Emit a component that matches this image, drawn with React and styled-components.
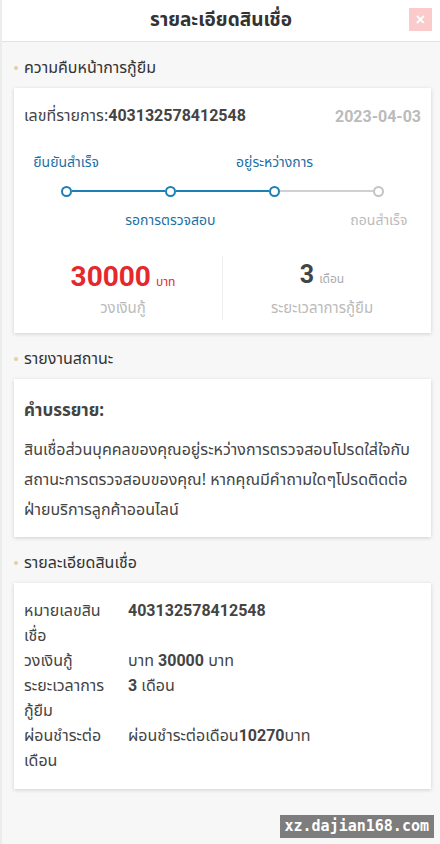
import React from 'react';
import styled, { createGlobalStyle } from 'styled-components';

const GlobalStyle = createGlobalStyle`
  html, body {
    margin: 0;
    padding: 0;
    background: #f7f7f7;
  }
  body {
    font-family: "Noto Sans", "Noto Sans Thai", "DejaVu Sans", sans-serif;
    color: #444;
  }
`;

const Page = styled.div`
  position: relative;
  min-height: 844px;
  background: #f7f7f7;
  border-left: 2px solid #ececec;
  box-sizing: border-box;
`;

/** Header rendering the top bar */
const Header = styled.header`
  position: relative;
  height: 41px;
  background: #fff;
  border-bottom: 1px solid #e2e2e2;
  display: flex;
  align-items: center;
  justify-content: center;
`;

const HeaderTitle = styled.h1`
  margin: 0;
  font-size: 19px;
  font-weight: 700;
  color: #333;
`;

const CloseBtn = styled.button`
  position: absolute;
  right: 8px;
  top: 8px;
  width: 23px;
  height: 23px;
  border: none;
  padding: 0;
  background: #fbcaca;
  color: #fff;
  font-size: 16px;
  font-weight: 700;
  line-height: 23px;
  cursor: pointer;
`;

const Content = styled.main`
  padding: 0 9px 40px 12px;
`;

const SectionTitle = styled.div`
  display: flex;
  align-items: center;
  gap: 6px;
  height: 22px;
  padding: 15px 0 9px;
  font-size: 16px;
  color: #333;

  &::before {
    content: '';
    width: 4px;
    height: 4px;
    border-radius: 50%;
    background: #e8cda8;
  }
`;

const Card = styled.section`
  background: #fff;
  box-shadow: 0 1px 4px rgba(0, 0, 0, 0.16);
  padding: ${({ $pad }) => $pad || '10px'};
`;

const OrderRow = styled.div`
  display: flex;
  justify-content: space-between;
  align-items: center;
  padding: 6px 0 0;
  font-size: 16px;
  color: #444;
`;

const Num = styled.span`
  font-family: Roboto, "Liberation Sans", sans-serif;
  font-weight: 700;
  font-size: ${({ $size }) => $size || '16px'};
  color: ${({ $color }) => $color || '#444'};
`;

const Steps = styled.div`
  display: grid;
  grid-template-columns: repeat(4, 1fr);
  margin: 19px -10px 0;
`;

const Step = styled.div`
  display: grid;
  grid-template-rows: 30px 28px 30px;
  justify-items: center;
  align-items: center;
`;

const StepLabel = styled.div`
  font-size: 14px;
  color: ${({ $done }) => ($done ? '#1d6fa3' : '#bbb')};
  grid-row: ${({ $below }) => ($below ? 3 : 1)};
  white-space: nowrap;
`;

const Track = styled.div`
  grid-row: 2;
  width: 100%;
  display: flex;
  align-items: center;
`;

const Half = styled.div`
  flex: 1;
  height: 2px;
  background: ${({ $state }) =>
    $state === 'none' ? 'transparent' : $state === 'done' ? '#1d7fb3' : '#d0d0d0'};
`;

const Dot = styled.div`
  width: 7px;
  height: 7px;
  border-radius: 50%;
  border: 2px solid ${({ $done }) => ($done ? '#1d7fb3' : '#c4c4c4')};
  background: #fff;
  flex: none;
`;

const Stats = styled.div`
  display: grid;
  grid-template-columns: 1fr 1px 1fr;
  margin-top: 21px;
  padding-bottom: 3px;
`;

const Stat = styled.div`
  display: flex;
  flex-direction: column;
  align-items: center;
  gap: 5px;
  padding-top: 4px;
`;

const Divider = styled.div`
  background: #eee;
`;

const StatValue = styled.div`
  display: flex;
  align-items: baseline;
  gap: 5px;
  height: 32px;
`;

const Unit = styled.span`
  font-size: 12px;
  color: ${({ $color }) => $color || '#aaa'};
`;

const StatLabel = styled.div`
  font-size: 15px;
  color: #bbb;
`;

const DescTitle = styled.h3`
  margin: 9px 0 10px;
  font-size: 17px;
  font-weight: 700;
  color: #444;
`;

const Para = styled.p`
  margin: 0;
  font-size: 16px;
  line-height: 30px;
  color: #444;
`;

const DetailGrid = styled.dl`
  margin: 0;
  display: grid;
  grid-template-columns: 104px 1fr;
  font-size: 16px;
  line-height: 25px;
  color: #444;
`;

const Term = styled.dt`
  margin: 0;
  padding-right: 18px;
`;

const Value = styled.dd`
  margin: 0;
`;

const Watermark = styled.div`
  position: absolute;
  right: 6px;
  bottom: 6px;
  padding: 2px 5px;
  background: #7d7d7d;
  color: #fff;
  font-family: "DejaVu Sans Mono", "Liberation Mono", monospace;
  font-weight: 700;
  font-size: 15px;
  line-height: 19px;
`;

const steps = [
  { label: 'ยืนยันสำเร็จ', done: true, below: false, left: 'none', right: 'done' },
  { label: 'รอการตรวจสอบ', done: true, below: true, left: 'done', right: 'done' },
  { label: 'อยู่ระหว่างการ', done: true, below: false, left: 'done', right: 'todo' },
  { label: 'ถอนสำเร็จ', done: false, below: true, left: 'todo', right: 'none' },
];

export default function App() {
  return (
    <Page>
      <GlobalStyle />
      <Header>
        <HeaderTitle>รายละเอียดสินเชื่อ</HeaderTitle>
        <CloseBtn aria-label="close">×</CloseBtn>
      </Header>

      <Content>
        <SectionTitle>ความคืบหน้าการกู้ยืม</SectionTitle>
        <Card>
          <OrderRow>
            <span>
              เลขที่รายการ:<Num>403132578412548</Num>
            </span>
            <Num $color="#bbb">2023-04-03</Num>
          </OrderRow>

          <Steps>
            {steps.map((s) => (
              <Step key={s.label}>
                <StepLabel $done={s.done} $below={s.below}>{s.label}</StepLabel>
                <Track>
                  <Half $state={s.left} />
                  <Dot $done={s.done} />
                  <Half $state={s.right} />
                </Track>
              </Step>
            ))}
          </Steps>

          <Stats>
            <Stat>
              <StatValue>
                <Num $size="28px" $color="#e4282e">30000</Num>
                <Unit $color="#e4282e">บาท</Unit>
              </StatValue>
              <StatLabel>วงเงินกู้</StatLabel>
            </Stat>
            <Divider />
            <Stat>
              <StatValue>
                <Num $size="25px" $color="#444">3</Num>
                <Unit>เดือน</Unit>
              </StatValue>
              <StatLabel>ระยะเวลาการกู้ยืม</StatLabel>
            </Stat>
          </Stats>
        </Card>

        <SectionTitle>รายงานสถานะ</SectionTitle>
        <Card $pad="10px 10px 13px">
          <DescTitle>คำบรรยาย:</DescTitle>
          <Para>
            สินเชื่อส่วนบุคคลของคุณอยู่ระหว่างการตรวจสอบโปรดใส่ใจกับสถานะการตรวจสอบของคุณ!
            หากคุณมีคำถามใดๆโปรดติดต่อ<wbr />ฝ่ายบริการลูกค้าออนไลน์
          </Para>
        </Card>

        <SectionTitle>รายละเอียดสินเชื่อ</SectionTitle>
        <Card $pad="15px 10px 16px">
          <DetailGrid>
            <Term>หมายเลขสิน<wbr />เชื่อ</Term>
            <Value><Num>403132578412548</Num></Value>
            <Term>วงเงินกู้</Term>
            <Value>บาท <Num>30000</Num> บาท</Value>
            <Term>ระยะเวลาการ<wbr />กู้ยืม</Term>
            <Value><Num>3</Num> เดือน</Value>
            <Term>ผ่อนชำระต่อ<wbr />เดือน</Term>
            <Value>ผ่อนชำระต่อเดือน<Num>10270</Num>บาท</Value>
          </DetailGrid>
        </Card>
      </Content>

      <Watermark>xz.dajian168.com</Watermark>
    </Page>
  );
}
